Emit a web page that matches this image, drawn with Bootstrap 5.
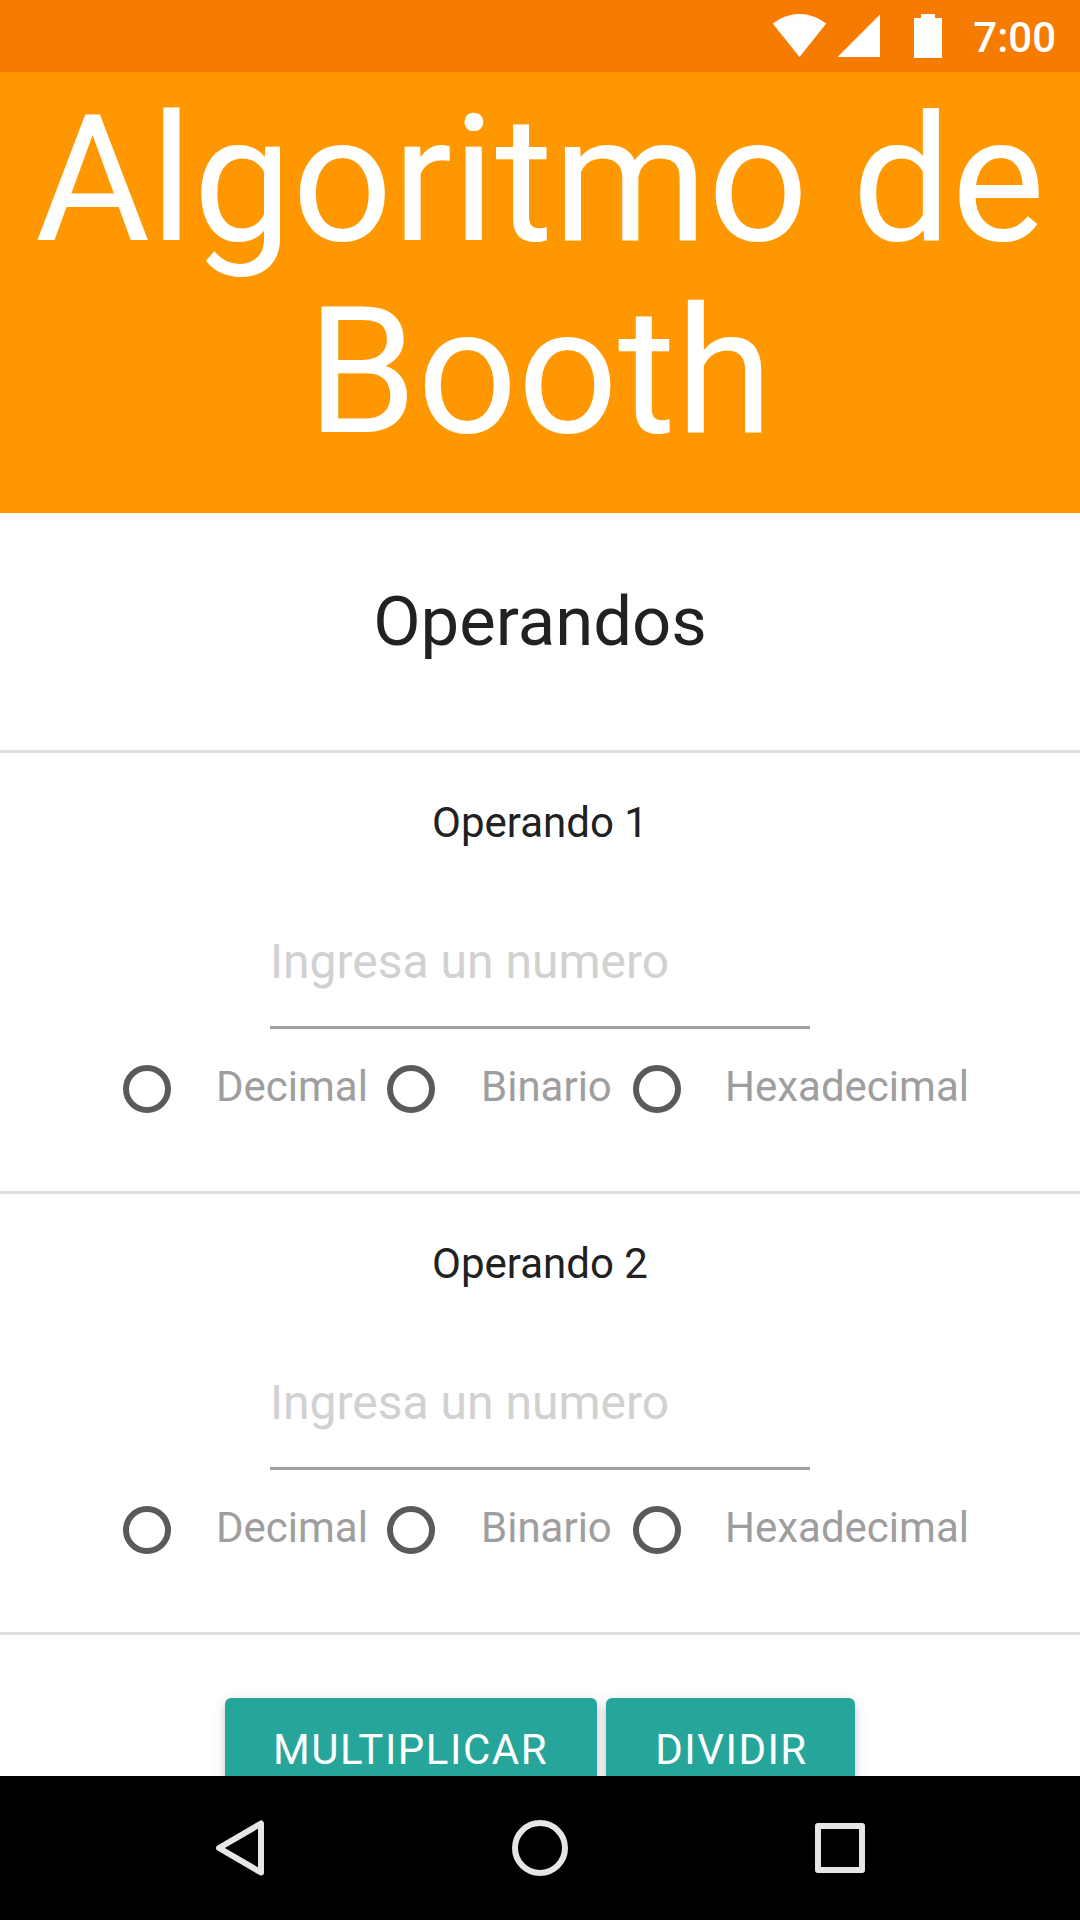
<!DOCTYPE html>
<html lang="es">
<head>
<meta charset="utf-8">
<meta name="viewport" content="width=device-width, initial-scale=1">
<title>Algoritmo de Booth</title>
<link href="https://cdn.jsdelivr.net/npm/bootstrap@5.3.0/dist/css/bootstrap.min.css" rel="stylesheet">
<style>
body{font-family:Roboto,"Noto Sans",sans-serif;font-size:42px;color:#212121;background:#fff}
.status-bar{height:72px;background:#f57c00;color:#fff;padding-right:24px}
.status-icons{width:172px;height:72px;margin-right:29px}
.clock{font-weight:500;line-height:76px}
.title-band{height:441px;padding-top:12px;background:#ff9800;color:#fff}
.title-band h1{font-size:176.4px;line-height:192px;font-weight:400}
.section-title{height:240px;padding-top:72px;border-bottom:3px solid #e0e0e0}
.section-title h2{font-size:68.88px;line-height:73px;font-weight:400}
.operand{height:441px;padding-top:45px;border-bottom:3px solid #e0e0e0}
.operand h3{font-size:42px;line-height:49px;font-weight:400}
.operand .number-field{width:540px;height:129px;margin-top:53px;padding:0 0 4px;border:0;border-bottom:3px solid #9e9e9e;border-radius:0;font-size:48px;line-height:57px;background:transparent;box-shadow:none}
.number-field::placeholder{color:#d1d1d1;opacity:1}
.radios{margin-top:36px;padding-left:123px;color:#9e9e9e}
.radios .form-check{min-height:0;height:48px}
.radios .form-check-input{float:none;width:48px;height:48px;margin:0 45px 0 0;border:6px solid #5a5a5a;background-color:transparent}
.radios label{line-height:44px;white-space:nowrap}
.choice-dec{width:264px}
.radios .choice-bin{width:246px}
.radios .choice-bin .form-check-input{margin-right:46px}
.radios .choice-hex .form-check-input{margin-right:44px}
.actions{padding-top:63px;gap:9px}
.actions .btn{height:108px;padding:0 0 4px;border:0;border-radius:6px;background:#26a69a;color:#fff;font-size:42px;line-height:104px;letter-spacing:1.5px;box-shadow:0 6px 6px rgba(0,0,0,.14),0 3px 15px rgba(0,0,0,.12),0 9px 3px -6px rgba(0,0,0,.2)}
.actions .btn-multiply{width:372px;padding-right:1px}
.actions .btn-divide{width:249px;padding-left:2px}
.nav-buttons{height:144px;background:#000;gap:240px}
.nav-buttons svg{width:60px;height:60px}
</style>
<script src="https://cdn.jsdelivr.net/npm/bootstrap@5.3.0/dist/js/bootstrap.bundle.min.js"></script>
</head>
<body class="vh-100 overflow-hidden d-flex flex-column">
<div class="status-bar d-flex align-items-start justify-content-end flex-shrink-0">
  <svg class="status-icons" viewBox="772 0 172 72" fill="#fff" aria-hidden="true">
    <path d="M799.5 57 772.7 23.5Q785 14 799.5 14T826.2 23.5Z"/>
    <path d="M837.5 57 880 14.5V57Z"/>
    <path d="M914 18h7v-4h14v4h7v40h-28Z"/>
  </svg>
  <span class="clock">7:00</span>
</div>
<main class="flex-fill overflow-hidden text-center">
  <header class="title-band"><h1 class="m-0">Algoritmo de<br>Booth</h1></header>
  <section class="section-title"><h2 class="m-0">Operandos</h2></section>
  <section class="operand d-flex flex-column align-items-center">
    <h3 class="mb-0">Operando 1</h3>
    <input class="form-control number-field" type="text" placeholder="Ingresa un numero">
    <div class="radios d-flex w-100">
      <div class="form-check d-flex p-0 m-0 choice-dec"><input class="form-check-input" type="radio" name="base1" id="dec1"><label for="dec1">Decimal</label></div>
      <div class="form-check d-flex p-0 m-0 choice-bin"><input class="form-check-input" type="radio" name="base1" id="bin1"><label for="bin1">Binario</label></div>
      <div class="form-check d-flex p-0 m-0 choice-hex"><input class="form-check-input" type="radio" name="base1" id="hex1"><label for="hex1">Hexadecimal</label></div>
    </div>
  </section>
  <section class="operand d-flex flex-column align-items-center">
    <h3 class="mb-0">Operando 2</h3>
    <input class="form-control number-field" type="text" placeholder="Ingresa un numero">
    <div class="radios d-flex w-100">
      <div class="form-check d-flex p-0 m-0 choice-dec"><input class="form-check-input" type="radio" name="base2" id="dec2"><label for="dec2">Decimal</label></div>
      <div class="form-check d-flex p-0 m-0 choice-bin"><input class="form-check-input" type="radio" name="base2" id="bin2"><label for="bin2">Binario</label></div>
      <div class="form-check d-flex p-0 m-0 choice-hex"><input class="form-check-input" type="radio" name="base2" id="hex2"><label for="hex2">Hexadecimal</label></div>
    </div>
  </section>
  <div class="actions d-flex justify-content-center">
    <button class="btn btn-multiply" type="button">MULTIPLICAR</button>
    <button class="btn btn-divide" type="button">DIVIDIR</button>
  </div>
</main>
<nav class="nav-buttons d-flex justify-content-center align-items-center flex-shrink-0">
  <svg viewBox="210 1818 60 60" fill="none" stroke="#e6e6e6" stroke-width="6" stroke-linejoin="round"><path d="M261 1823.5V1872.5L219 1848Z"/></svg>
  <svg viewBox="510 1818 60 60" fill="none" stroke="#e6e6e6" stroke-width="6"><circle cx="540" cy="1848" r="25"/></svg>
  <svg viewBox="810 1818 60 60" fill="none" stroke="#e6e6e6" stroke-width="6" stroke-linejoin="round"><path d="M818 1826H862V1870H818Z"/></svg>
</nav>
</body>
</html>
